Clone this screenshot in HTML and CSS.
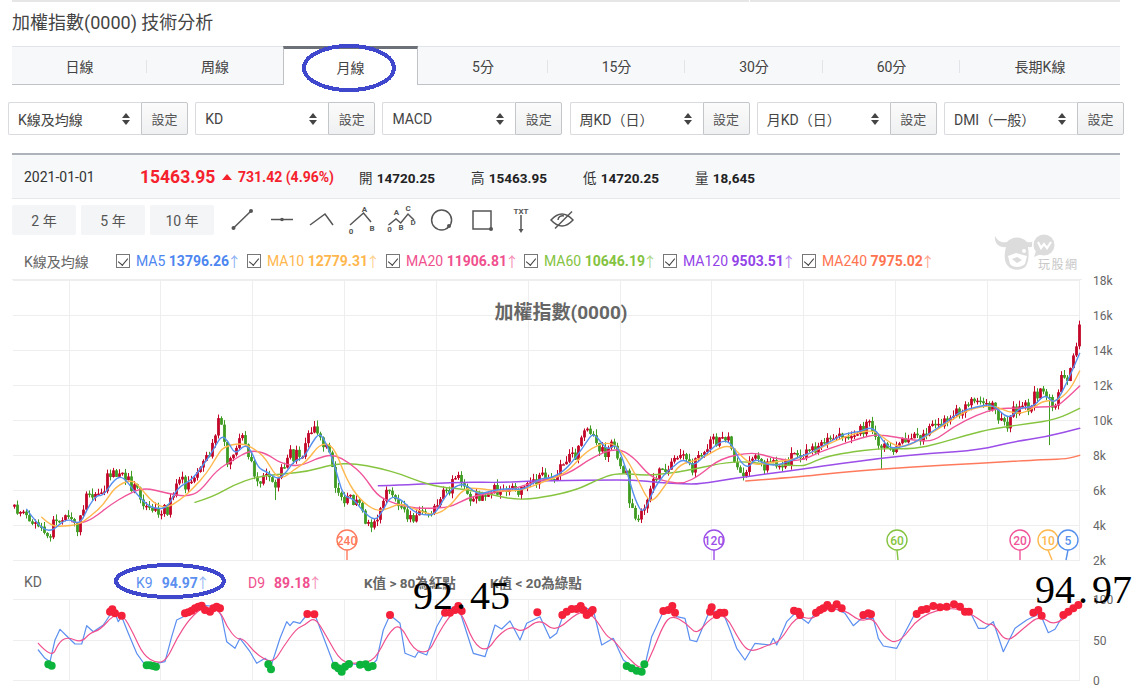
FILE: index.html
```html
<!DOCTYPE html>
<html lang="zh-Hant">
<head>
    <meta charset="UTF-8"/>
    <title>加權指數(0000) 技術分析</title>
    <link rel="stylesheet" href="styles.css">
</head>
<body>
<div class="top-edge">
    <div class="edge-left"></div>
    <div class="edge-right"></div>
</div>
<h1 class="page-title">加權指數(0000) 技術分析</h1>

<div class="tabs">
    <div class="tab">日線</div>
    <div class="tab">周線</div>
    <div class="tab active">月線</div>
    <div class="tab">5分</div>
    <div class="tab">15分</div>
    <div class="tab">30分</div>
    <div class="tab">60分</div>
    <div class="tab last">長期K線</div>
</div>

<div class="selects">
    <div class="select-group"><div class="select-box"><span>K線及均線</span><i class="updown"></i></div><button>設定</button></div>
    <div class="select-group"><div class="select-box"><span>KD</span><i class="updown"></i></div><button>設定</button></div>
    <div class="select-group"><div class="select-box"><span>MACD</span><i class="updown"></i></div><button>設定</button></div>
    <div class="select-group"><div class="select-box"><span>周KD（日）</span><i class="updown"></i></div><button>設定</button></div>
    <div class="select-group"><div class="select-box"><span>月KD（日）</span><i class="updown"></i></div><button>設定</button></div>
    <div class="select-group"><div class="select-box"><span>DMI（一般）</span><i class="updown"></i></div><button>設定</button></div>
</div>

<div class="info-bar">
    <div class="date">2021-01-01</div>
    <div class="price">15463.95</div>
    <i class="tri-up"></i>
    <div class="change">731.42 (4.96%)</div>
    <div class="ohlc">開 <b>14720.25</b></div>
    <div class="ohlc">高 <b>15463.95</b></div>
    <div class="ohlc">低 <b>14720.25</b></div>
    <div class="ohlc">量 <b>18,645</b></div>
</div>

<div class="tools">
    <button class="range">2 年</button>
    <button class="range">5 年</button>
    <button class="range">10 年</button>
    <div class="icons">
        <svg viewBox="0 0 40 30"><path d="M11.5 23L29 6"/><circle class="dot" cx="11.5" cy="23" r="2"/><circle class="dot" cx="29" cy="6" r="2"/></svg>
        <svg viewBox="0 0 40 30"><path d="M9 14.5H31"/><circle class="dot" cx="20" cy="14.5" r="1.8"/></svg>
        <svg viewBox="0 0 40 30"><path d="M8 20L23 9L31 20"/></svg>
        <svg viewBox="0 0 40 30"><path d="M8 20L21.5 8L29 17"/><text x="22.5" y="7" text-anchor="middle">A</text><text x="9" y="29" text-anchor="middle">0</text><text x="30" y="26" text-anchor="middle">B</text></svg>
        <svg viewBox="0 0 40 30"><path d="M6.5 20L14 14L18.7 18L26 9L32 15"/><text x="14.5" y="10" text-anchor="middle">A</text><text x="26" y="6" text-anchor="middle">C</text><text x="7.6" y="27" text-anchor="middle">0</text><text x="19" y="25" text-anchor="middle">B</text><text x="31" y="20" text-anchor="middle">D</text></svg>
        <svg viewBox="0 0 40 30"><circle cx="19.6" cy="15" r="10"/><circle class="dot" cx="27" cy="21" r="2"/></svg>
        <svg viewBox="0 0 40 30"><rect x="11" y="6" width="18" height="18"/><circle class="dot" cx="29" cy="24" r="2"/></svg>
        <svg viewBox="0 0 40 30"><text x="19" y="9" text-anchor="middle">TXT</text><path d="M19 10V25"/><path class="dot" d="M16.5 24H21.5L19 28Z"/></svg>
        <svg viewBox="0 0 40 30"><path d="M9 15Q20 3 31 15Q20 27 9 15Z"/><path d="M16 15a4.5 4.5 0 0 1 6-4"/><path d="M30 6.5L13 23.5"/></svg>
    </div>
</div>

<div class="ma-row">
    <span class="ma-title">K線及均線</span>
    <label class="ma-item ma5"><input type="checkbox" checked/>MA5 <b>13796.26</b><em>↑</em></label>
    <label class="ma-item ma10"><input type="checkbox" checked/>MA10 <b>12779.31</b><em>↑</em></label>
    <label class="ma-item ma20"><input type="checkbox" checked/>MA20 <b>11906.81</b><em>↑</em></label>
    <label class="ma-item ma60"><input type="checkbox" checked/>MA60 <b>10646.19</b><em>↑</em></label>
    <label class="ma-item ma120"><input type="checkbox" checked/>MA120 <b>9503.51</b><em>↑</em></label>
    <label class="ma-item ma240"><input type="checkbox" checked/>MA240 <b>7975.02</b><em>↑</em></label>
    <div class="logo">
        <svg viewBox="0 0 60 40" width="60" height="40">
            <path d="M0 3C-1 11 5 15 11 14C9 22 9 29 13 33C17 38 27 38 31 33C34 28 34 21 33 14C38 15 44 11 43 4C40 9 36 10 32 9C27 3 17 3 12 9C8 10 3 9 0 3Z"/>
            <path class="logo-cut" d="M13 23L21 20L32 23L30 31C26 35 18 35 15 31Z"/>
            <path d="M17 26L22 24L27 27L22 30Z"/>
            <circle class="logo-cut" cx="29" cy="18" r="2"/>
            <circle class="logo-ring" cx="49" cy="12" r="12"/>
            <circle cx="49" cy="12" r="10.5"/>
            <path d="M41 18L39 24L46 21Z"/>
            <path class="logo-mark" d="M43 9L46 15L49 11L52 15L56 9"/>
        </svg>
        <span class="logo-text">玩股網</span>
    </div>
</div>

<svg id="priceChart" class="chart" viewBox="0 279 1142 289"></svg>

<div class="kd-row">
    <span class="kd-title">KD</span>
    <span class="kd-k">K9<b>94.97</b><em>↑</em></span>
    <span class="kd-d">D9<b>89.18</b><em>↑</em></span>
    <span class="kd-note first">K值 &gt; 80為紅點</span>
    <span class="kd-note">K值 &lt; 20為綠點</span>
</div>

<svg id="kdChart" class="chart kd-chart" viewBox="0 595 1142 93"></svg>

<svg class="marks" viewBox="0 0 1142 688">
    <ellipse cx="349" cy="68" rx="45" ry="22"/>
    <ellipse cx="170" cy="581" rx="54" ry="16"/>
</svg>
<div class="note note-a">92<span class="note-dot">.</span>45</div>
<div class="note note-b">94<span class="note-dot">.</span>97</div>

<script src="chart.js"></script>
</body>
</html>
```

FILE: styles.css
```css
* {
    margin: 0;
    padding: 0;
    box-sizing: border-box
}

body {
    font-family: Roboto, 'Noto Sans CJK TC', sans-serif;
    background: #fff;
    color: #444;
    width: 1142px;
    height: 688px;
    overflow: hidden;
    position: relative
}

.top-edge {
    display: flex;
    gap: 1px;
    height: 2px;
    margin-left: 12px;
    width: 1108px
}

.edge-left {
    width: 737px;
    background: #e6e6e6
}

.edge-right {
    flex: 1;
    background: #e6e6e6
}

.page-title {
    font-size: 18px;
    font-weight: 400;
    line-height: 42px;
    height: 42px;
    margin-bottom: 2px;
    padding-left: 12px;
    color: #444
}

.tabs {
    display: grid;
    grid-template-columns: 135px 136px 135px 130px 137px 138px 137px 160px;
    width: 1108px;
    height: 39px;
    margin-left: 12px;
    background: #f7f8fa;
    border-top: 1px solid #e1e4e8;
    border-bottom: 1px solid #bfc3c7
}

.tab {
    position: relative;
    display: flex;
    align-items: center;
    justify-content: center;
    font-size: 14px;
    color: #444
}

.tab::after {
    content: "";
    position: absolute;
    right: 0;
    top: 13px;
    height: 13px;
    width: 1px;
    background: #e2e4e7
}

.tab.last::after,
.tab.active::after,
.tab:nth-child(2)::after {
    display: none
}

.tab.active {
    background: #fff;
    margin: -1px 0 -1px 0;
    border-top: 3px solid #6c7078;
    border-left: 1px solid #bfc3c7;
    border-right: 1px solid #bfc3c7
}

.selects {
    display: flex;
    gap: 7.2px;
    margin: 17px 0 0 8px;
    height: 33px
}

.select-group {
    display: flex;
    width: 180px
}

.select-box {
    flex: 1;
    display: flex;
    align-items: center;
    justify-content: space-between;
    padding: 0 11px 0 9px;
    font-size: 14px;
    color: #444;
    border: 1px solid #d9dbde;
    border-right: none;
    border-radius: 2px 0 0 2px
}

.updown {
    position: relative;
    width: 8px;
    height: 12px
}

.updown::before,
.updown::after {
    content: "";
    position: absolute;
    left: 0;
    border-left: 4px solid transparent;
    border-right: 4px solid transparent
}

.updown::before {
    top: 0;
    border-bottom: 5px solid #444
}

.updown::after {
    bottom: 0;
    border-top: 5px solid #444
}

.select-group button {
    width: 47px;
    font-family: inherit;
    font-size: 13px;
    color: #555;
    background: linear-gradient(#fbfbfb, #eff0f1);
    border: 1px solid #c4c7ca;
    border-radius: 0 2px 2px 0
}

.info-bar {
    display: flex;
    align-items: center;
    width: 1108px;
    height: 46px;
    margin: 18px 0 0 12px;
    padding-left: 12px;
    background: #f6f8fa;
    border-top: 2px solid #adb3b9;
    border-bottom: 1px solid #e5e9ee;
    font-size: 14px;
    color: #333
}

.date {
    width: 116px
}

.price {
    width: 82px;
    font-size: 17.5px;
    font-weight: 700;
    color: #f5222d
}

.tri-up {
    width: 0;
    height: 0;
    border-left: 5px solid transparent;
    border-right: 5px solid transparent;
    border-bottom: 6px solid #f5222d;
    margin-right: 6px
}

.change {
    width: 121px;
    font-weight: 700;
    color: #f5222d
}

.ohlc {
    width: 112px;
    font-size: 13.5px
}

.ohlc b {
    margin-left: 1px;
    color: #222
}

.tools {
    display: flex;
    gap: 5px;
    height: 30px;
    margin: 6px 0 0 12px
}

.range {
    width: 64px;
    font-family: inherit;
    font-size: 14px;
    color: #555;
    background: #f4f5f7;
    border: none;
    border-radius: 2px
}

.icons {
    display: flex;
    margin-left: 3px
}

.icons svg {
    width: 40px;
    height: 30px;
    overflow: visible;
    fill: none;
    stroke: #555;
    stroke-width: 1.5
}

.icons .dot {
    fill: #555;
    stroke: none
}

.icons text {
    font-family: Roboto, sans-serif;
    font-size: 8px;
    font-weight: 700;
    fill: #555;
    stroke: none
}

.ma-row {
    position: relative;
    display: flex;
    align-items: center;
    height: 44px;
    padding: 8px 0 0 24px;
    font-size: 14px
}

.ma-title {
    width: 92px;
    color: #666
}

.ma-item {
    display: flex;
    align-items: center;
    white-space: pre;
    width: 139px
}

.ma5 {
    width: 131px;
    color: #4d86f0
}

.ma10 {
    color: #ffb74d
}

.ma20 {
    width: 138px;
    color: #f0508e
}

.ma60 {
    color: #84c341
}

.ma120 {
    color: #9344e8
}

.ma240 {
    color: #ff7350
}

.ma-item input,
.ma-item input:checked {
    appearance: none;
    position: relative;
    width: 14px;
    height: 14px;
    margin-right: 6px;
    border: 1px solid #777;
    background: #fff
}

.ma-item input::after {
    content: "";
    position: absolute;
    left: 3px;
    top: 1px;
    width: 5px;
    height: 8px;
    border-right: 1px solid #444;
    border-bottom: 1px solid #444;
    transform: rotate(40deg)
}

em {
    font-style: normal;
    opacity: .65;
    margin-left: -2px
}

.logo {
    position: absolute;
    left: 995px;
    top: -2px;
    width: 90px;
    height: 42px
}

.logo svg {
    fill: #dcdcdc;
    overflow: visible
}

.logo .logo-cut {
    fill: #fff
}

.logo .logo-ring {
    fill: #fff
}

.logo .logo-mark {
    fill: none;
    stroke: #fff;
    stroke-width: 2.2
}

.logo-text {
    position: absolute;
    left: 43px;
    top: 22px;
    font-size: 12px;
    letter-spacing: 1.5px;
    color: #c8c8c8
}

.chart {
    display: block;
    width: 1142px;
    height: 289px;
    overflow: visible
}

.kd-chart {
    height: 93px
}

.chart text {
    font-family: Roboto, 'Noto Sans CJK TC', sans-serif
}

.grid {
    stroke: #eeeeee;
    stroke-width: 1;
    fill: none
}

.axis-label {
    font-size: 12px;
    fill: #666
}

.chart-title {
    font-size: 19px;
    font-weight: 700;
    fill: #666
}

.line {
    fill: none;
    stroke-width: 1.4;
    stroke-linejoin: round;
    stroke-linecap: round
}

.kd-line {
    stroke-width: 1.2
}

.pin {
    fill: #fff;
    stroke-width: 1.4
}

.pin-label {
    font-size: 12px;
    font-weight: 500;
    stroke: none
}

.kd-row {
    display: flex;
    align-items: center;
    height: 27px;
    padding-left: 24px;
    font-size: 14px;
    white-space: pre
}

.kd-title {
    width: 112px;
    color: #666
}

.kd-k {
    width: 112px;
    color: #5b8ff0
}

.kd-d {
    width: 116px;
    color: #f0508e
}

.kd-k b,
.kd-d b {
    margin-left: 9px
}

.kd-note {
    width: 126px;
    font-size: 13.5px;
    font-weight: 700;
    color: #666
}

.marks {
    position: absolute;
    left: 0;
    top: 0;
    width: 1142px;
    height: 688px;
    fill: none;
    stroke: #3f48cc;
    stroke-width: 4;
    shape-rendering: crispEdges;
    pointer-events: none
}

.note {
    position: absolute;
    font-family: 'Liberation Serif', serif;
    font-size: 40px;
    line-height: 40px;
    color: #000;
    letter-spacing: 0
}

.note-dot {
    margin: 0 4px 0 3px
}

.note-a {
    left: 413px;
    top: 576px
}

.note-b {
    left: 1035px;
    top: 570px
}
```

FILE: chart.js
```js
const NS = 'http://www.w3.org/2000/svg';
const COLORS = {
    ma5: '#5590ee', ma10: '#ffb84d', ma20: '#f0559a', ma60: '#86c440', ma120: '#9b4ee8', ma240: '#ff7a5c',
    k: '#5b8ff0', d: '#f0508e', up: '#c3062a', down: '#3f9c22', red: '#f5203a', green: '#0db43c'
};
const GRID_X = [69.5, 160.5, 252.5, 344.5, 436.5, 528.5, 620.5, 711.5, 803.5, 895.5, 987.5, 1079.5];

function add(svg, tag, attrs, text) {
    const el = document.createElementNS(NS, tag);
    for (const k in attrs) el.setAttribute(k, attrs[k]);
    if (text !== undefined) el.textContent = text;
    svg.appendChild(el);
    return el;
}

// the data below was read off in three pieces, each with its own origin
function crop(ox, oy, flat) {
    const out = [];
    for (let i = 0; i < flat.length; i += 2) out.push([ox + flat[i] / 3, oy + flat[i + 1] / 3]);
    return out;
}

function join(...parts) {
    const out = [];
    parts.forEach(part => part.forEach(p => {
        if (!out.length || p[0] > out[out.length - 1][0]) out.push(p);
    }));
    return out;
}

function price(a, b, c) {
    return join(crop(0, 400, a), crop(400, 400, b), crop(780, 300, c));
}

function kd(a, b, c) {
    return join(crop(0, 560, a), crop(400, 560, b), crop(770, 560, c));
}

function smooth(pts) {
    let d = 'M' + pts[0][0].toFixed(1) + ' ' + pts[0][1].toFixed(1);
    for (let i = 1; i < pts.length - 1; i++) {
        const mx = (pts[i][0] + pts[i + 1][0]) / 2, my = (pts[i][1] + pts[i + 1][1]) / 2;
        d += 'Q' + pts[i][0].toFixed(1) + ' ' + pts[i][1].toFixed(1) + ' ' + mx.toFixed(1) + ' ' + my.toFixed(1);
    }
    const last = pts[pts.length - 1];
    return d + 'L' + last[0].toFixed(1) + ' ' + last[1].toFixed(1);
}

function straight(pts) {
    return 'M' + pts.map(p => p[0].toFixed(1) + ' ' + p[1].toFixed(1)).join('L');
}

function at(pts, x) {
    for (let i = 1; i < pts.length; i++) {
        if (x <= pts[i][0]) {
            const t = (x - pts[i - 1][0]) / (pts[i][0] - pts[i - 1][0]);
            return pts[i - 1][1] + t * (pts[i][1] - pts[i - 1][1]);
        }
    }
    return pts[pts.length - 1][1];
}

let seed = 12345;
function rnd() {
    seed = (seed * 1103515 + 12345) % 2147483648;
    return seed / 2147483648;
}

const path = price(
    [40,320,60,325,75,345,100,365,120,395,150,400,160,365,180,340,200,365,230,378,250,300,270,280,300,280,320,235,345,225,365,225,380,245,400,260,420,300,440,325,470,330,500,330,515,280,530,245,560,250,590,220,605,180,630,150,650,70,665,90,680,180,700,150,715,115,735,130,750,190,770,240,800,225,820,265,840,215,860,160,880,170,910,160,925,85,945,75,970,130,990,170,1005,270,1025,310,1045,285,1070,310,1090,350,1110,385,1125,360,1140,300,1165,270,1200,310],
    [0,320,20,360,50,340,90,360,115,295,140,270,170,240,190,250,205,285,230,290,260,275,290,265,330,265,355,280,380,245,410,235,440,235,470,220,490,180,530,165,550,100,575,90,590,130,610,170,635,120,655,190,680,220,685,290,700,345,730,345,745,270,770,225,800,195,825,160,850,180,875,200,900,160,930,115,960,120,985,125,1005,200,1030,215,1060,170,1090,205,1130,195,1170,175,1200,165],
    [0,480,40,465,80,460,110,445,150,420,180,400,230,395,265,375,285,410,300,450,330,445,360,435,400,415,430,400,470,380,500,355,540,330,570,310,620,310,650,340,680,370,700,330,740,320,780,265,800,280,815,340,830,290,840,225,860,225,875,170,885,135,895,92]
);

const ma = {
    ma240: price([], [1037,243,1200,230],
        [0,535,200,515,400,500,600,490,800,478,860,477,899,466]),
    ma120: price([1135,257,1200,255],
        [0,253,100,250,200,246,300,248,400,242,500,242,600,240,700,240,780,248,850,252,900,252,1000,235,1100,222,1200,208],
        [0,520,150,495,300,475,450,460,600,450,700,425,800,410,899,385]),
    ma60: price([585,307,640,290,700,255,770,230,850,222,920,215,1000,193,1060,190,1140,205,1200,222],
        [0,222,60,245,120,262,200,268,280,285,350,300,430,292,530,270,590,240,650,218,750,228,860,212,1000,182,1100,192,1200,198],
        [0,493,80,495,130,472,200,458,300,445,400,447,480,430,560,405,640,385,740,372,830,358,899,325]),
    ma20: price([215,365,240,372,280,355,330,315,380,285,430,262,500,280,560,290,600,275,650,210,700,180,750,150,800,160,840,190,900,200,950,175,1000,162,1050,190,1090,225,1130,285,1170,305,1200,315],
        [0,310,50,325,90,325,150,322,200,295,260,280,340,268,420,240,500,225,580,170,650,143,700,170,750,230,800,245,850,252,900,225,960,175,1060,155,1120,175,1200,185],
        [0,485,60,475,120,455,180,435,240,415,290,403,350,412,400,420,460,425,520,380,590,345,650,325,720,325,780,320,830,320,860,295,899,258]),
    ma10: price([125,352,155,380,190,378,235,375,270,350,310,315,345,260,395,238,420,262,460,310,500,325,540,300,580,265,620,220,650,170,670,140,725,128,770,150,800,180,825,225,850,235,880,210,920,185,960,130,1000,135,1040,240,1080,300,1130,335,1165,325,1200,310],
        [0,298,40,325,100,348,150,320,190,265,240,265,300,275,370,270,430,245,500,220,560,150,630,122,670,160,710,230,740,295,760,305,800,250,840,190,900,180,985,127,1030,175,1060,195,1100,190,1200,175],
        [0,490,50,470,120,445,170,420,230,398,285,390,330,430,370,443,430,415,500,370,570,325,640,315,680,335,735,342,790,300,830,305,870,270,899,213]),
    ma5: price([80,328,110,370,150,400,200,353,240,375,265,320,290,285,310,288,345,235,370,230,400,270,440,315,470,327,505,322,530,265,575,240,610,195,640,150,665,105,685,125,705,165,735,132,755,155,775,205,800,215,835,240,860,215,885,180,910,175,935,130,960,95,985,145,1005,200,1030,290,1060,295,1085,330,1125,365,1150,330,1170,290,1200,295],
        [0,295,40,335,70,345,105,345,140,280,180,250,210,262,235,285,280,270,330,265,370,270,420,235,450,235,490,215,530,170,560,125,580,98,605,130,625,150,650,130,680,210,705,300,730,345,760,270,790,225,820,200,850,175,880,200,920,160,965,120,995,130,1020,185,1045,205,1065,175,1100,195,1140,195,1200,170],
        [0,490,40,465,90,460,150,425,195,400,240,395,280,378,320,440,350,445,400,430,450,400,500,365,540,335,590,320,640,312,685,360,720,322,760,322,795,280,825,315,860,250,899,160])
};

// the few long wicks that stand out from the rest, all on falling months
const SPIKES = {1048: 445, 880: 469, 274: 500};

function drawGrid(svg, ys, labels) {
    ys.forEach((y, i) => {
        add(svg, 'line', {class: 'grid', x1: 13, x2: 1080, y1: y, y2: y});
        add(svg, 'text', {class: 'axis-label', x: 1093, y: y + 4}, labels[i]);
    });
    GRID_X.forEach(x => add(svg, 'line', {class: 'grid', x1: x, x2: x, y1: ys[0], y2: ys[ys.length - 1]}));
}

function drawCandles(svg) {
    let prev = at(path, 13.5);
    for (let x = 13.5; x < 1079; x += 3) {
        const close = at(path, x) + (rnd() - .5) * 13;
        const top = Math.min(prev, close), bottom = Math.max(prev, close);
        let color = close < prev ? COLORS.up : COLORS.down;
        let low = bottom + rnd() * 5;
        for (const s in SPIKES) {
            if (Math.abs(s - x) < 1.5) {
                low = SPIKES[s];
                color = COLORS.down;
            }
        }
        const cx = Math.round(x) + .5;
        add(svg, 'line', {x1: cx, x2: cx, y1: top - rnd() * 6, y2: low, stroke: color, 'stroke-width': 1});
        add(svg, 'rect', {x: cx - 1.4, y: top, width: 2.8, height: Math.max(bottom - top, 1.5), fill: color});
        prev = close;
    }
}

function drawPin(svg, x, label, color, tipX) {
    add(svg, 'line', {x1: x, x2: tipX, y1: 550, y2: 560, stroke: color, 'stroke-width': 1.4});
    add(svg, 'circle', {class: 'pin', cx: x, cy: 540, r: 10, stroke: color});
    add(svg, 'text', {class: 'pin-label', x: x, y: 544.5, 'text-anchor': 'middle', fill: color}, label);
}

function drawPrice() {
    const svg = document.getElementById('priceChart');
    const labels = ['18k', '16k', '14k', '12k', '10k', '8k', '6k', '4k', '2k'];
    drawGrid(svg, labels.map((_, i) => 280.5 + 35 * i), labels);
    add(svg, 'line', {class: 'grid', x1: 12, x2: 1082, y1: 279.5, y2: 279.5});
    add(svg, 'text', {class: 'chart-title', x: 561, y: 319, 'text-anchor': 'middle'}, '加權指數(0000)');
    drawCandles(svg);
    for (const name in ma) add(svg, 'path', {class: 'line', d: smooth(ma[name]), stroke: COLORS[name]});
    drawPin(svg, 347, '240', COLORS.ma240, 347);
    drawPin(svg, 714, '120', COLORS.ma120, 714);
    drawPin(svg, 897, '60', COLORS.ma60, 898);
    drawPin(svg, 1020, '20', COLORS.ma20, 1020);
    drawPin(svg, 1048, '10', COLORS.ma10, 1052);
    drawPin(svg, 1068, '5', COLORS.ma5, 1066);
}

function drawKd() {
    const svg = document.getElementById('kdChart');
    drawGrid(svg, [599.5, 640.5, 680.5], ['100', '50', '0']);
    const k = kd(
        [115,270,135,295,150,305,165,240,180,208,200,228,225,252,245,252,260,197,280,215,310,195,330,165,345,160,355,185,365,170,385,220,410,280,435,315,470,310,495,305,515,230,530,180,550,170,570,150,600,135,650,140,665,170,680,245,705,265,720,235,750,275,770,310,795,295,815,312,840,235,860,185,870,197,880,185,900,190,920,165,945,165,970,230,1000,310,1025,335,1045,310,1080,315,1110,320,1130,300,1150,210,1170,165,1200,190],
        [0,200,15,280,45,292,55,275,80,285,110,200,130,165,160,155,180,155,220,280,255,290,285,195,305,207,330,183,360,240,380,190,420,170,450,235,470,220,490,165,540,140,580,150,605,255,640,235,670,300,720,335,735,315,755,230,790,155,815,140,830,170,855,175,870,240,890,245,930,150,970,160,990,210,1010,265,1035,300,1065,250,1110,255],
        [0,245,10,235,20,255,50,185,75,160,115,190,135,160,170,135,225,160,250,197,275,175,310,175,325,235,340,258,380,265,430,170,480,140,550,135,600,155,625,205,645,205,670,185,700,275,735,205,770,180,810,160,835,218,855,208,880,165,930,130]
    );
    const d = kd(
        [115,250,155,295,175,250,200,230,245,248,270,218,300,210,340,165,370,165,400,220,430,285,470,310,500,300,530,235,570,175,610,140,660,150,680,200,710,238,730,235,770,285,820,310,850,260,890,205,915,195,945,170,980,230,1025,310,1080,310,1125,300,1165,220,1200,190],
        [0,200,40,270,85,280,110,230,150,165,180,145,220,250,260,275,295,225,335,198,365,218,420,175,465,218,540,150,580,165,620,230,640,238,680,290,730,335,760,270,790,195,815,165,860,190,890,225,930,175,975,160,1020,245,1050,278,1110,253],
        [0,255,30,245,80,165,125,180,165,145,225,150,270,185,310,172,340,230,385,255,450,165,550,140,610,165,650,195,670,190,710,250,760,205,810,165,855,200,930,135]
    );
    add(svg, 'path', {class: 'line kd-line', d: straight(k), stroke: COLORS.k});
    add(svg, 'path', {class: 'line kd-line', d: smooth(d), stroke: COLORS.d});

    const red = [
        ...crop(0, 560, [330,155,337,148,345,160,365,167,555,160,565,157,575,152,585,145,595,140,605,137,615,150,630,155,640,145,650,140,660,145,922,162,943,163,1170,165]),
        ...crop(400, 560, [135,158,150,158,165,150,175,138,185,153,412,157,487,165,500,155,515,147,530,147,542,138,550,150,560,165,570,158,578,150,790,153,805,150,817,138,825,158,935,142,930,155,950,165,960,158,973,158]),
        ...crop(770, 560, [72,152,85,155,90,165,138,158,150,150,160,145,172,135,185,145,200,133,215,145,280,165,295,160,303,163,440,162,455,150,470,147,490,138,510,142,530,140,552,133,570,140,585,155,597,155,790,158,805,150,815,167,880,165,895,155,910,145,925,135])
    ];
    const green = [
        ...crop(0, 560, [145,313,155,317,440,316,450,316,460,318,468,320,805,313,813,328,1005,317,1015,325,1025,335,1035,320,1047,312,1080,314,1097,313,1105,322,1118,318]),
        ...crop(400, 560, [680,318,695,325,710,332,725,335,733,313])
    ];
    red.forEach(p => add(svg, 'circle', {cx: p[0], cy: p[1], r: 4, fill: COLORS.red}));
    green.forEach(p => add(svg, 'circle', {cx: p[0], cy: p[1], r: 4, fill: COLORS.green}));
}

drawPrice();
drawKd();
```
